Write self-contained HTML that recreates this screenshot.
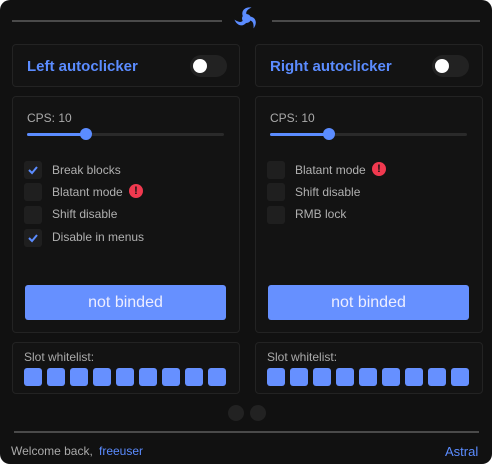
<!DOCTYPE html>
<html><head><meta charset="utf-8"><style>
*{margin:0;padding:0;box-sizing:border-box}
html,body{width:492px;height:464px;background:#fff;overflow:hidden}
body{font-family:"Liberation Sans",sans-serif}
.win{position:absolute;left:0;top:0;width:492px;height:464px;background:#111111;border-radius:10px;overflow:hidden}
.a{position:absolute}
.line{position:absolute;height:2px;background:#4a4a4a}
.card{position:absolute;background:#131313;border:1px solid #232323;border-radius:4px}
.h{position:absolute;font-weight:bold;font-size:15px;color:#5b8cff}
.tog{position:absolute;width:37px;height:22px;border-radius:11px;background:#222}
.tog i{position:absolute;left:3px;top:4px;width:14px;height:14px;border-radius:50%;background:#fff}
.lbl{position:absolute;font-size:12px;color:#aaa}
.track{position:absolute;height:3px;background:#2a2a2a;border-radius:2px}
.fill{position:absolute;left:0;top:0;height:3px;background:#5b8cff;border-radius:2px}
.knob{position:absolute;width:12px;height:12px;border-radius:50%;background:#5b8cff}
.cb{position:absolute;width:18px;height:18px;border-radius:3px;background:#1f1f1f}
.cb svg{position:absolute;left:4px;top:4px}
.ct{position:absolute;font-size:12px;color:#b0b0b0}
.warn{position:absolute;width:14px;height:14px;border-radius:50%;background:#f0394f;color:#111;font-weight:bold;font-size:11px;text-align:center;line-height:14px}
.btn{position:absolute;height:35px;background:#6690ff;border-radius:3px;color:#eef;font-size:16px;text-align:center;line-height:35px}
.sq{position:absolute;width:18px;height:18px;background:#6690ff;border-radius:3px}
.dot{position:absolute;width:16px;height:16px;border-radius:50%;background:#222}
</style></head><body><div class="win">
<div class="line" style="left:12px;top:20px;width:210px"></div>
<div class="line" style="left:272px;top:20px;width:208px"></div>
<svg class="a" style="left:233px;top:5px" width="27" height="27" viewBox="-13.5 -13.5 27 27">
<g fill="#5b8cff">
<circle r="4.5"/>
<path d="M-3.5 -2 C-6 -8 -1 -12 5 -11 C1 -9 -1 -7 0 -4Z"/>
<path d="M-3.5 -2 C-6 -8 -1 -12 5 -11 C1 -9 -1 -7 0 -4Z" transform="rotate(120)"/>
<path d="M-3.5 -2 C-6 -8 -1 -12 5 -11 C1 -9 -1 -7 0 -4Z" transform="rotate(240)"/>
</g></svg>

<!-- left -->
<div class="card" style="left:12px;top:44px;width:228px;height:43px"></div>
<div class="h" style="left:27px;top:58px">Left autoclicker</div>
<div class="tog" style="left:190px;top:55px"><i></i></div>
<div class="card" style="left:12px;top:96px;width:228px;height:237px"></div>
<div class="lbl" style="left:27px;top:111px">CPS: 10</div>
<div class="track" style="left:27px;top:133px;width:197px"><div class="fill" style="width:59px"></div></div>
<div class="knob" style="left:80px;top:128px"></div>
<div class="cb" style="left:24px;top:161px"><svg width="10" height="10"><path d="M1 5 L4 8 L9 2" stroke="#5b8cff" stroke-width="2" fill="none"/></svg></div>
<div class="ct" style="left:52px;top:163px">Break blocks</div>
<div class="cb" style="left:24px;top:183px"></div>
<div class="ct" style="left:52px;top:185px">Blatant mode</div>
<div class="warn" style="left:129px;top:184px">!</div>
<div class="cb" style="left:24px;top:206px"></div>
<div class="ct" style="left:52px;top:207px">Shift disable</div>
<div class="cb" style="left:24px;top:229px"><svg width="10" height="10"><path d="M1 5 L4 8 L9 2" stroke="#5b8cff" stroke-width="2" fill="none"/></svg></div>
<div class="ct" style="left:52px;top:230px">Disable in menus</div>
<div class="btn" style="left:25px;top:285px;width:201px">not binded</div>
<div class="card" style="left:12px;top:342px;width:228px;height:52px"></div>
<div class="lbl" style="left:24px;top:350px">Slot whitelist:</div>

<!-- right -->
<div class="card" style="left:255px;top:44px;width:228px;height:43px"></div>
<div class="h" style="left:270px;top:58px">Right autoclicker</div>
<div class="tog" style="left:432px;top:55px"><i></i></div>
<div class="card" style="left:255px;top:96px;width:228px;height:237px"></div>
<div class="lbl" style="left:270px;top:111px">CPS: 10</div>
<div class="track" style="left:270px;top:133px;width:197px"><div class="fill" style="width:59px"></div></div>
<div class="knob" style="left:323px;top:128px"></div>
<div class="cb" style="left:267px;top:161px"></div>
<div class="ct" style="left:295px;top:163px">Blatant mode</div>
<div class="warn" style="left:372px;top:162px">!</div>
<div class="cb" style="left:267px;top:183px"></div>
<div class="ct" style="left:295px;top:185px">Shift disable</div>
<div class="cb" style="left:267px;top:206px"></div>
<div class="ct" style="left:295px;top:207px">RMB lock</div>
<div class="btn" style="left:268px;top:285px;width:201px">not binded</div>
<div class="card" style="left:255px;top:342px;width:228px;height:52px"></div>
<div class="lbl" style="left:267px;top:350px">Slot whitelist:</div>

<div class="dot" style="left:228px;top:405px"></div>
<div class="dot" style="left:250px;top:405px"></div>
<div class="line" style="left:14px;top:431px;width:465px"></div>
<div class="a" style="left:11px;top:444px;font-size:12px;color:#aaa">Welcome back,</div>
<div class="a" style="left:99px;top:444px;font-size:12px;color:#5b8cff">freeuser</div>
<div class="a" style="left:445px;top:444px;font-size:13px;color:#5b8cff">Astral</div>

<div class="sq" style="left:24px;top:368px"></div><div class="sq" style="left:47px;top:368px"></div><div class="sq" style="left:70px;top:368px"></div><div class="sq" style="left:93px;top:368px"></div><div class="sq" style="left:116px;top:368px"></div><div class="sq" style="left:139px;top:368px"></div><div class="sq" style="left:162px;top:368px"></div><div class="sq" style="left:185px;top:368px"></div><div class="sq" style="left:208px;top:368px"></div>
<div class="sq" style="left:267px;top:368px"></div><div class="sq" style="left:290px;top:368px"></div><div class="sq" style="left:313px;top:368px"></div><div class="sq" style="left:336px;top:368px"></div><div class="sq" style="left:359px;top:368px"></div><div class="sq" style="left:382px;top:368px"></div><div class="sq" style="left:405px;top:368px"></div><div class="sq" style="left:428px;top:368px"></div><div class="sq" style="left:451px;top:368px"></div>
</div></body></html>
